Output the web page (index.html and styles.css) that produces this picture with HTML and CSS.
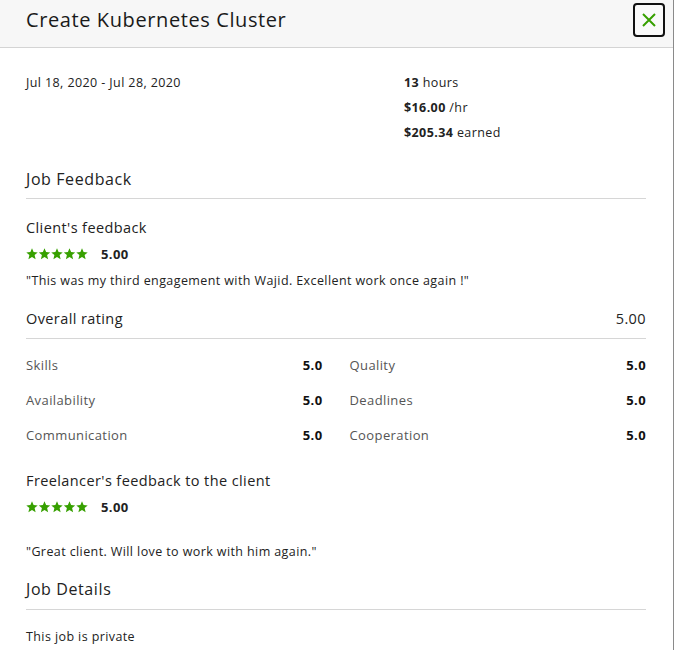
FILE: index.html
```html
<!DOCTYPE html>
<html>
<head>
<meta charset="utf-8">
<link rel="stylesheet" href="styles.css">
</head>
<body>
<div class="modal">
  <header class="head">
    <h1 class="title">Create Kubernetes Cluster</h1>
    <button class="close" aria-label="Close">
      <svg width="16" height="16" viewBox="0 0 16 16"><path d="M2 2 L14 14 M14 2 L2 14" stroke="#37a000" stroke-width="2" fill="none"/></svg>
    </button>
  </header>
  <main class="body">
    <div class="summary">
      <div class="dates">Jul 18, 2020 - Jul 28, 2020</div>
      <div class="stats">
        <div><b>13</b> hours</div>
        <div><b>$16.00</b> /hr</div>
        <div><b>$205.34</b> earned</div>
      </div>
    </div>

    <h2 class="section">Job Feedback</h2>

    <h3 class="sub">Client's feedback</h3>
    <div class="rating">
      <span class="stars">
        <svg width="62" height="12" viewBox="0 0 62 12">
          <defs><path id="st" d="M6 0.3 L7.6 4.1 L11.7 4.4 L8.6 7.1 L9.6 11.2 L6 9 L2.4 11.2 L3.4 7.1 L0.3 4.4 L4.4 4.1 Z" fill="#37a000"/></defs>
          <use href="#st" x="0"/><use href="#st" x="12.5"/><use href="#st" x="25"/><use href="#st" x="37.5"/><use href="#st" x="50"/>
        </svg>
      </span>
      <b class="score">5.00</b>
    </div>
    <p class="quote">"This was my third engagement with Wajid. Excellent work once again !"</p>

    <div class="overall">
      <span>Overall rating</span>
      <span>5.00</span>
    </div>

    <div class="grid">
      <div class="item"><span>Skills</span><b>5.0</b></div>
      <div class="item"><span>Quality</span><b>5.0</b></div>
      <div class="item"><span>Availability</span><b>5.0</b></div>
      <div class="item"><span>Deadlines</span><b>5.0</b></div>
      <div class="item"><span>Communication</span><b>5.0</b></div>
      <div class="item"><span>Cooperation</span><b>5.0</b></div>
    </div>

    <h3 class="sub sub2">Freelancer's feedback to the client</h3>
    <div class="rating">
      <span class="stars">
        <svg width="62" height="12" viewBox="0 0 62 12">
          <use href="#st" x="0"/><use href="#st" x="12.5"/><use href="#st" x="25"/><use href="#st" x="37.5"/><use href="#st" x="50"/>
        </svg>
      </span>
      <b class="score">5.00</b>
    </div>
    <p class="quote quote2">"Great client. Will love to work with him again."</p>

    <h2 class="section section2">Job Details</h2>
    <p class="private">This job is private</p>
  </main>
</div>
</body>
</html>
```

FILE: styles.css
```css
* { box-sizing: border-box; }
html, body { margin: 0; padding: 0; background: #fff; }
body {
  font-family: "Open Sans", "Liberation Sans", sans-serif;
  color: #222;
  width: 675px;
  height: 650px;
  overflow: hidden;
  letter-spacing: 0.4px;
}
.modal {
  width: 674px;
  min-height: 650px;
  border-right: 1px solid #8a8a8a;
  background: #fff;
}
.head {
  height: 48px;
  background: #f7f7f7;
  border-bottom: 1px solid #d4d4d4;
  display: flex;
  align-items: flex-start;
  justify-content: space-between;
  padding: 0 8px 0 26px;
}
.title {
  margin: 6px 0 0;
  font-size: 20px;
  font-weight: 400;
  letter-spacing: 0.6px;
  color: #1a1a1a;
}
.close {
  margin-top: 3px;
  width: 32px;
  height: 34px;
  border: 2px solid #111;
  border-radius: 4px;
  background: #fafafa;
  display: flex;
  align-items: center;
  justify-content: center;
  padding: 0;
}
.body {
  padding: 0 27px 0 26px;
}
.summary {
  display: flex;
  padding-top: 26px;
  font-size: 12.5px;
}
.dates {
  width: 378px;
  line-height: 18px;
}
.stats div {
  line-height: 18px;
  margin-bottom: 7px;
}
.stats b { font-weight: 700; }
.section {
  margin: 18px 0 0;
  font-size: 16px;
  font-weight: 400;
  line-height: 24px;
  padding-bottom: 7px;
  border-bottom: 1px solid #d6d6d6;
  letter-spacing: 0.6px;
}
.sub {
  margin: 19px 0 0;
  font-size: 14.5px;
  font-weight: 400;
  line-height: 20px;
}
.sub2 { margin-top: 27px; }
.rating {
  display: flex;
  align-items: center;
  margin-top: 7px;
  height: 18px;
}
.stars { display: flex; }
.score {
  margin-left: 13px;
  font-size: 13px;
  font-weight: 700;
}
.quote {
  margin: 9px 0 0;
  font-size: 12.5px;
  line-height: 18px;
}
.quote2 { margin-top: 27px; }
.overall {
  display: flex;
  justify-content: space-between;
  margin-top: 19px;
  font-size: 14.5px;
  line-height: 20px;
  padding-bottom: 9px;
  border-bottom: 1px solid #d6d6d6;
}
.grid {
  display: grid;
  grid-template-columns: 1fr 1fr;
  column-gap: 27px;
  row-gap: 17px;
  margin-top: 17px;
}
.item {
  display: flex;
  justify-content: space-between;
  font-size: 13px;
  line-height: 18px;
}
.item span { color: #555; }
.item b { font-weight: 700; color: #111; }
.section2 { margin-top: 16px; padding-bottom: 8px; }
.private {
  margin: 18px 0 0;
  font-size: 12.5px;
  line-height: 18px;
}
```
